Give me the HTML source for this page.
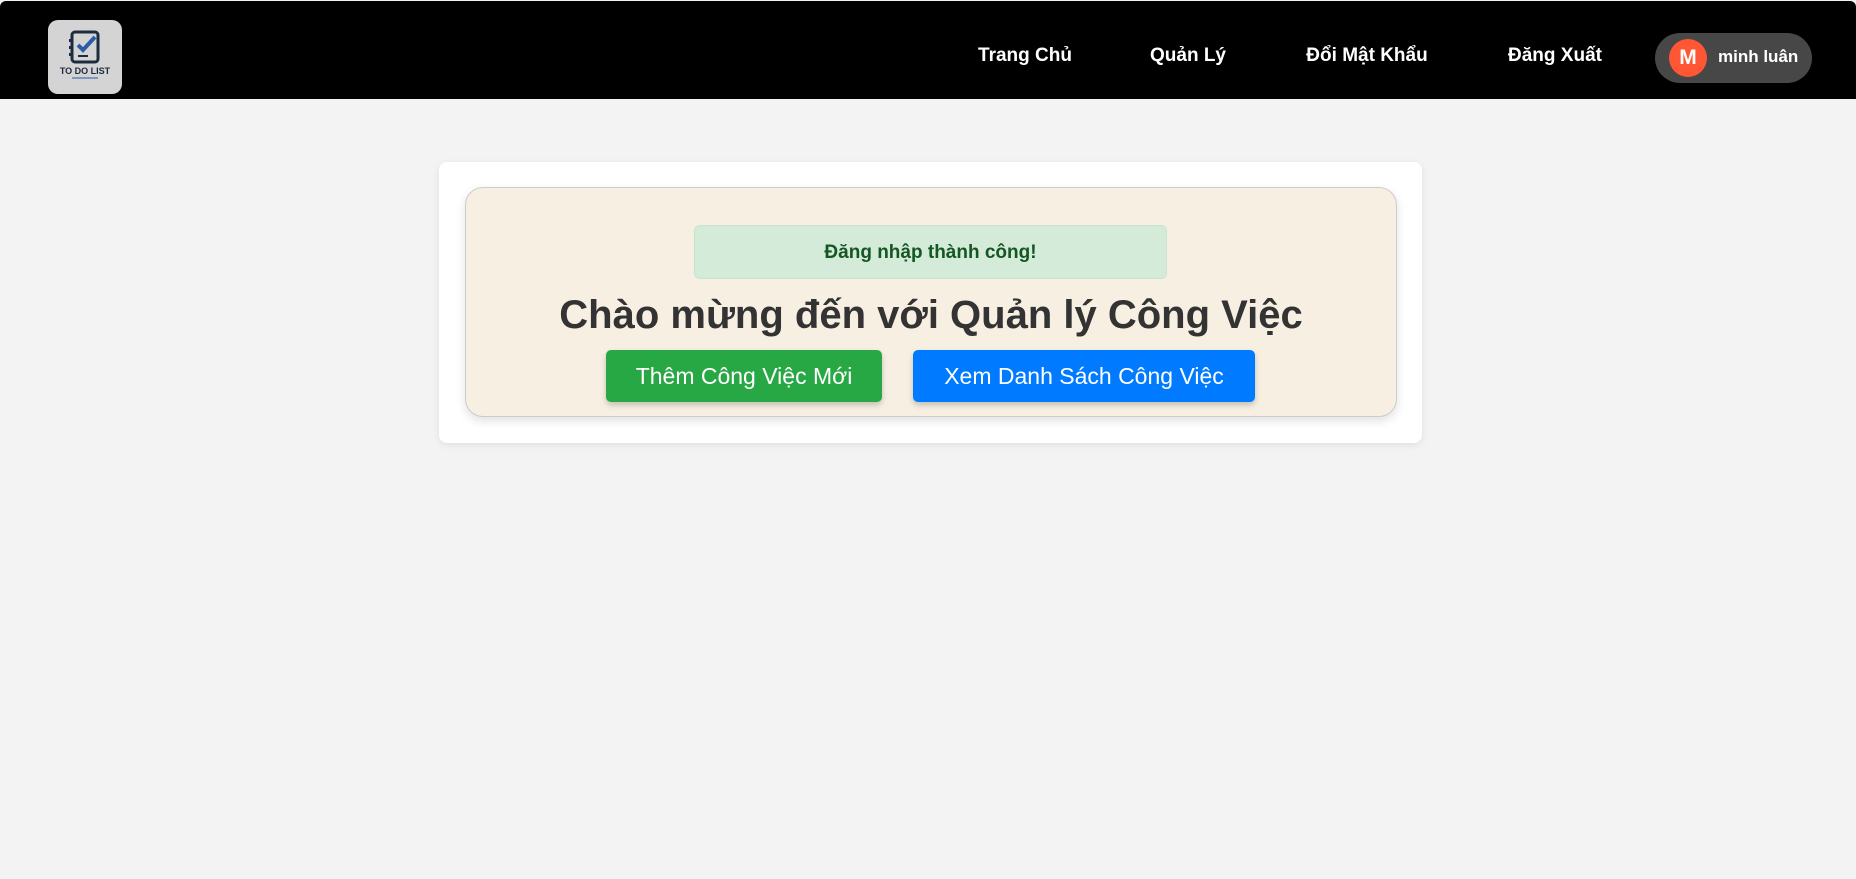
<!DOCTYPE html>
<html><head><meta charset="utf-8"><style>
*{box-sizing:border-box;margin:0;padding:0}
body{width:1856px;height:879px;background:#f3f3f3;font-family:"Liberation Sans",Arial,sans-serif;position:relative;overflow:hidden}
.nav{position:absolute;left:0;top:1px;width:1856px;height:98px;background:#000;border-radius:6px 6px 0 0}
.logo{position:absolute;left:48px;top:19px;width:74px;height:74px;border-radius:10px;background:#d4d4d4}
.nl{position:absolute;top:44px;color:#fff;font-weight:bold;font-size:19px;transform:translateX(-50%);white-space:nowrap}
.pill{position:absolute;left:1655px;top:32px;width:157px;height:50px;border-radius:25px;background:#474747}
.av{position:absolute;left:14px;top:6px;width:38px;height:38px;border-radius:50%;background:#ff5733;color:#fff;font-weight:bold;font-size:21px;text-align:center;line-height:38px}
.un{position:absolute;left:63px;top:14px;color:#fff;font-weight:bold;font-size:17px}
.card{position:absolute;left:439px;top:162px;width:983px;height:281px;background:#fff;border-radius:8px;box-shadow:0 2px 8px rgba(0,0,0,.08)}
.inner{position:absolute;left:465px;top:187px;width:932px;height:230px;background:#f6efe2;border:1px solid #ccc;border-radius:18px;box-shadow:0 4px 10px rgba(0,0,0,.12)}
.alert{position:absolute;left:694px;top:225px;width:473px;height:54px;background:#d4ebd9;border:1px solid #c3e6cb;border-radius:6px;color:#155724;font-weight:bold;font-size:19px;text-align:center;line-height:54px}
h1{position:absolute;left:465px;width:932px;top:293px;text-align:center;font-size:40px;color:#333;font-weight:bold}
.btn{position:absolute;top:350px;height:52px;border-radius:5px;color:#fff;font-size:23px;text-align:center;line-height:52px;box-shadow:0 3px 6px rgba(0,0,0,.2)}
</style></head><body>
<div class="nav">
<div class="logo"><svg width="74" height="74" viewBox="0 0 74 74">
<rect x="24" y="12" width="26" height="30" rx="3" fill="none" stroke="#1d2b3f" stroke-width="3"/>
<path d="M30 25l5 5 12-13" fill="none" stroke="#2a5ca8" stroke-width="4"/>
<rect x="21" y="19" width="4" height="3" fill="#1d2b3f"/><rect x="21" y="26" width="4" height="3" fill="#1d2b3f"/><rect x="21" y="33" width="4" height="3" fill="#1d2b3f"/>
<path d="M30 36h10" stroke="#1d2b3f" stroke-width="2"/>
<text x="37" y="54" font-size="9" font-weight="bold" fill="#1d2b3f" text-anchor="middle" font-family="Liberation Sans">TO DO LIST</text>
<path d="M24 58h26" stroke="#2a5ca8" stroke-width="1"/></svg></div>
<div class="nl" style="left:1025px">Trang Chủ</div>
<div class="nl" style="left:1188px">Quản Lý</div>
<div class="nl" style="left:1367px">Đổi Mật Khẩu</div>
<div class="nl" style="left:1555px">Đăng Xuất</div>
<div class="pill"><div class="av">M</div><div class="un">minh luân</div></div>
</div>
<div class="card"></div>
<div class="inner"></div>
<div class="alert">Đăng nhập thành công!</div>
<h1>Chào mừng đến với Quản lý Công Việc</h1>
<div class="btn" style="left:606px;width:276px;background:#28a745">Thêm Công Việc Mới</div>
<div class="btn" style="left:913px;width:342px;background:#007bff">Xem Danh Sách Công Việc</div>
</body></html>
